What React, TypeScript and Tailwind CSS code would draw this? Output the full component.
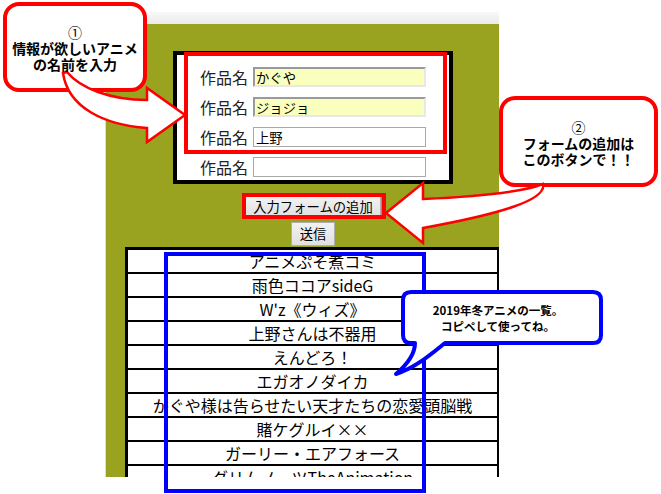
import React from 'react';

const titles = [
  'アニメぷそ煮コミ',
  '雨色ココアsideG',
  "W'z《ウィズ》",
  '上野さんは不器用',
  'えんどろ！',
  'エガオノダイカ',
  'かぐや様は告らせたい天才たちの恋愛頭脳戦',
  '賭ケグルイ××',
  'ガーリー・エアフォース',
  'グリムノーツTheAnimation',
];

const fields = [
  { value: 'かぐや', filled: true },
  { value: 'ジョジョ', filled: true },
  { value: '上野', filled: false },
  { value: '', filled: false },
];

const App: React.FC = () => {
  return (
    <div className="relative w-[661px] h-[494px] overflow-hidden bg-white font-['Noto_Sans_CJK_JP',sans-serif] text-black">
      {/* captured page */}
      <div className="ml-[105px] mt-[12px] w-[394px] h-[465px] overflow-hidden flex flex-col border-l border-[#dcdcdc]">
        <div className="h-[12px] shrink-0 bg-linear-to-b from-[#f8f8f8] to-[#ebebeb]" />
        <div className="flex-1 min-h-0 overflow-hidden bg-[#99a31f] pt-[27px]">
          {/* form */}
          <div className="ml-[67px] w-[280px] flex flex-col items-center">
            <div className="w-[280px] bg-white border-4 border-black pt-[12px] pb-[3px] flex flex-col gap-[10px]">
              {fields.map((f, i) => (
                <div key={i} className="flex items-center justify-center gap-[5px] h-[20px] shrink-0">
                  <span className="w-[48px] text-[16px] leading-[20px] text-[#222] whitespace-nowrap">作品名</span>
                  <input
                    readOnly
                    defaultValue={f.value}
                    className={
                      f.filled
                        ? 'w-[173px] h-[20px] px-[1px] text-[13.33px] leading-[16px] bg-[#faffbd] border-2 border-t-[#9a9a9a] border-l-[#9a9a9a] border-r-[#e8e8e8] border-b-[#e8e8e8] outline-none'
                        : 'w-[173px] h-[20px] px-[2px] text-[13.33px] leading-[16px] bg-white border border-[#a9a9a9] outline-none'
                    }
                  />
                </div>
              ))}
            </div>
            <button className="mt-[12px] h-[22px] px-[7px] text-[13.33px] leading-[16px] border border-[#adadad] bg-linear-to-b from-[#f2f2f2] to-[#e0e0e0] whitespace-nowrap">
              入力フォームの追加
            </button>
            <button className="mt-[4px] h-[24px] px-[8px] text-[13.33px] leading-[16px] border border-[#adadad] bg-linear-to-b from-[#f2f2f2] to-[#e0e0e0]">
              送信
            </button>
          </div>

          {/* anime list */}
          <div className="mt-[1px] ml-[19px] w-[374px] bg-white border-l-[3px] border-t-[3px] border-r-2 border-black">
            {titles.map((t) => (
              <div key={t} className="h-[24px] border-b-2 border-black text-center text-[16px] leading-[22px] whitespace-nowrap">
                {t}
              </div>
            ))}
          </div>
        </div>
      </div>

      {/* highlight frames */}
      <div className="absolute left-[184px] top-[52px] w-[263px] h-[102px] border-4 border-[#ff0000] pointer-events-none" />
      <div className="absolute left-[242px] top-[193px] w-[144px] h-[26px] border-4 border-[#ff0000] pointer-events-none" />
      <div className="absolute left-[164px] top-[252px] w-[262px] h-[241px] border-4 border-[#0000ff] pointer-events-none" />

      {/* callout shapes */}
      <svg className="absolute left-0 top-0 pointer-events-none" width="661" height="494" viewBox="0 0 661 494">
        <rect x="5" y="4" width="140" height="86" rx="14" fill="#fff" stroke="#ff0000" strokeWidth="4" />
        <path
          d="M67 72 C80 88 110 100 147 100 L147 88 L185 115 L147 142 L147 128 C105 125 68 108 63 73 Z"
          fill="#fff"
          stroke="#ff0000"
          strokeWidth="2.5"
        />
        <rect x="501" y="98" width="155" height="87" rx="14" fill="#fff" stroke="#ff0000" strokeWidth="4" />
        <path
          d="M386 213 L423 183 L423 199 C470 197 520 193 543 184 C547 200 500 214 423 228 L423 243 Z"
          fill="#fff"
          stroke="#ff0000"
          strokeWidth="2.5"
        />
        <path
          d="M411 292 H593 Q601 292 601 300 V335 Q601 343 593 343 H445 C430 355 415 368 396 374 C410 362 415 352 415 343 H411 Q403 343 403 335 V300 Q403 292 411 292 Z"
          fill="#fff"
          stroke="#0000ff"
          strokeWidth="4"
          strokeLinejoin="round"
        />
      </svg>

      {/* callout texts */}
      <div className="absolute left-[5px] top-[24px] w-[140px] text-center text-[14px] leading-[16px] font-bold">
        <div className="font-normal">①</div>
        <div>情報が欲しいアニメ</div>
        <div>の名前を入力</div>
      </div>
      <div className="absolute left-[501px] top-[119px] w-[155px] text-center text-[14px] leading-[16px] font-bold">
        <div className="font-normal">②</div>
        <div>フォームの追加は</div>
        <div>このボタンで！！</div>
      </div>
      <div className="absolute left-[399px] top-[302px] w-[198px] text-center text-[11.5px] leading-[16px] font-bold">
        <div>2019年冬アニメの一覧。</div>
        <div>コピペして使ってね。</div>
      </div>
    </div>
  );
};

export default App;
